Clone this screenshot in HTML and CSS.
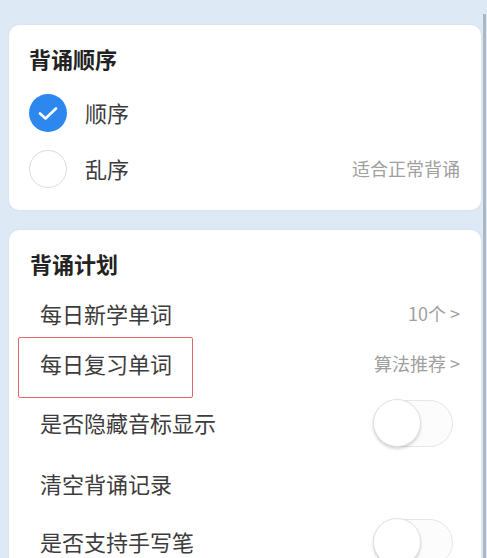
FILE: index.html
```html
<!DOCTYPE html>
<html lang="zh-CN">
<head>
<meta charset="utf-8">
<link rel="stylesheet" href="styles.css">
</head>
<body>
<div class="page">
  <div class="main">
    <section class="card card-order">
      <div class="card-title">背诵顺序</div>
      <div class="option">
        <span class="radio radio-on">
          <svg viewBox="0 0 38 38" width="38" height="38"><path d="M11 19.5 L16.5 24.5 L27 14.5" fill="none" stroke="#fff" stroke-width="2.6" stroke-linecap="round" stroke-linejoin="round"/></svg>
        </span>
        <span class="option-label">顺序</span>
      </div>
      <div class="option">
        <span class="radio"></span>
        <span class="option-label">乱序</span>
        <span class="hint">适合正常背诵</span>
      </div>
    </section>
    <section class="card card-plan">
      <div class="card-title">背诵计划</div>
      <div class="row row-1">
        <span class="row-label">每日新学单词</span>
        <span class="hint">10个 &gt;</span>
      </div>
      <div class="row row-2">
        <span class="row-label">每日复习单词</span>
        <span class="hint">算法推荐 &gt;</span>
        <div class="mark"></div>
      </div>
      <div class="row row-3">
        <span class="row-label">是否隐藏音标显示</span>
        <span class="toggle"><span class="knob"></span></span>
      </div>
      <div class="row row-4">
        <span class="row-label">清空背诵记录</span>
      </div>
      <div class="row row-5">
        <span class="row-label">是否支持手写笔</span>
        <span class="toggle"><span class="knob"></span></span>
      </div>
    </section>
  </div>
  <div class="strip"></div>
</div>
</body>
</html>
```

FILE: styles.css
```css
html, body {
  margin: 0;
  padding: 0;
}
body {
  background: #dee9f6;
  height: 558px;
  overflow: hidden;
  font-family: "Noto Sans CJK SC", "Noto Sans", sans-serif;
  color: #3c3c3c;
}
.page {
  display: flex;
  padding-left: 9px;
}
.main {
  width: 472px;
  padding-top: 25px;
  display: flex;
  flex-direction: column;
  gap: 20px;
}
.strip {
  width: 3px;
  margin-left: 2px;
  margin-top: 14px;
  height: 544px;
  background: #aeb6c2;
}
.card {
  background: #fff;
  border-radius: 10px;
  box-sizing: border-box;
  box-shadow: 0 0 2px rgba(150, 170, 200, 0.25);
}
.card-order {
  height: 185px;
  padding: 7px 21px 0 20px;
}
.card-plan {
  height: 360px;
  padding: 7px 21px 0 21px;
  position: relative;
}
.card-title {
  height: 52px;
  line-height: 52px;
  font-size: 22px;
  font-weight: 700;
  color: #222;
}
.option {
  height: 56px;
  display: flex;
  align-items: center;
}
.radio {
  width: 38px;
  height: 38px;
  margin-top: 2px;
  border-radius: 50%;
  box-sizing: border-box;
  border: 1.5px solid #dcdcdc;
  flex: none;
  display: flex;
}
.radio-on {
  background: #2d87ef;
  border: none;
}
.option-label {
  margin-left: 18px;
  font-size: 22px;
  flex: 1;
}
.hint {
  font-size: 18px;
  color: #a0a0a0;
}
.row {
  display: flex;
  align-items: center;
  padding-left: 10px;
  position: relative;
}
.row-label {
  flex: 1;
  font-size: 22px;
}
.row-1 { height: 48px; }
.row-2 { height: 52px; }
.row-3 { height: 66px; }
.row-4 { height: 56px; }
.row-5 { height: 60px; }
.mark {
  position: absolute;
  left: -12px;
  top: 0;
  width: 175px;
  height: 61px;
  box-sizing: border-box;
  border: 1.5px solid #e0686a;
  border-radius: 2px;
}
.toggle {
  width: 80px;
  height: 47px;
  margin-right: 7px;
  margin-top: 2px;
  border-radius: 24px;
  box-sizing: border-box;
  border: 1px solid #e6e6e6;
  background: #fcfcfc;
  display: flex;
  align-items: center;
  flex: none;
}
.knob {
  width: 48px;
  height: 48px;
  margin-left: -1px;
  border-radius: 50%;
  background: #fff;
  box-sizing: border-box;
  border: 1px solid #e2e2e2;
  box-shadow: 0 2px 3px rgba(0, 0, 0, 0.16);
}
```
